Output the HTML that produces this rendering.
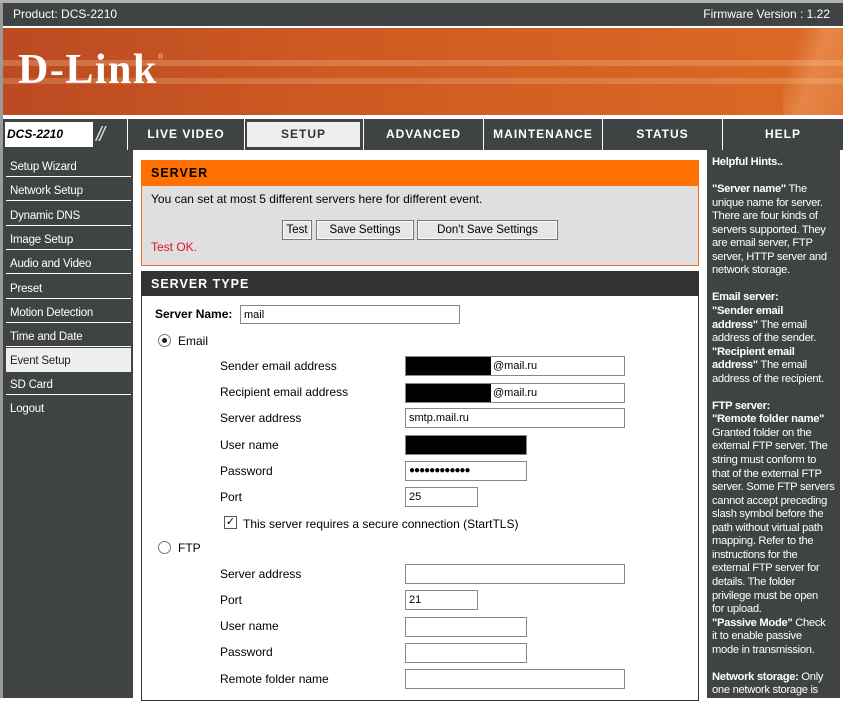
<!DOCTYPE html>
<html><head><meta charset="utf-8"><style>
*{margin:0;padding:0;box-sizing:border-box}
body{width:843px;height:698px;overflow:hidden;background:#fff;font-family:"Liberation Sans",Tahoma,sans-serif;font-size:12px;color:#000;position:relative}
.a{position:absolute}
.top{left:3px;top:3px;width:840px;height:23px;background:#404344;color:#fff;font-size:12px}
.banner{left:3px;top:28px;width:840px;height:87px;background:linear-gradient(90deg,#bb4a22 0%,#cf5a22 40%,#dc6a25 100%);overflow:hidden}
.nav{top:119px;height:31px;background:#404344;color:#fff;font-weight:bold;font-size:12px;letter-spacing:1px;text-align:center;line-height:31px}
.side{left:3px;top:150px;width:130px;height:548px;background:#404344}
.si{position:absolute;left:6px;width:125px;height:23px;color:#fff;font-size:11.5px;line-height:26px;padding-left:4px;border-bottom:1px solid #fff;letter-spacing:-0.2px}
.hint{left:707px;top:150px;width:133px;height:548px;background:#404344;color:#fff;font-size:11.2px;line-height:13.55px;padding:6px 3px 0 5px;letter-spacing:-0.3px}
.lbl{position:absolute;left:220px;font-size:12px}
.in{position:absolute;left:405px;height:20px;border:1px solid #888;background:#fff;font-size:11px;padding-left:3px;line-height:18px}
.btn{position:absolute;top:220px;height:20px;border:1px solid #777;background:#e6e6e6;font-size:11.5px;text-align:center;line-height:18px;box-shadow:inset 0 0 0 1px #fafafa}
.radio{position:absolute;width:13px;height:13px;border:1px solid #777;border-radius:50%;background:#fff}
</style></head><body>
<div class="a" style="left:0;top:0;width:3px;height:698px;background:#9a9a9a"></div>
<div class="a" style="left:0;top:0;width:843px;height:3px;background:#b0b0b0"></div>
<div class="a top"><span class="a" style="left:10px;top:4px">Product: DCS-2210</span><span class="a" style="right:13px;top:4px">Firmware Version : 1.22</span></div>
<div class="a banner">
<div class="a" style="left:0;top:32px;width:840px;height:6px;background:rgba(255,220,180,.25)"></div>
<div class="a" style="left:0;top:50px;width:840px;height:6px;background:rgba(255,220,180,.22)"></div>
<div class="a" style="left:780px;top:0;width:60px;height:87px;background:linear-gradient(110deg,rgba(255,200,150,0) 20%,rgba(255,200,150,.3) 50%,rgba(255,200,150,.15) 100%)"></div>
<div class="a" style="left:15px;top:20px;color:#fff;font-family:'Liberation Serif',serif;font-weight:bold;font-size:42px;line-height:44px;letter-spacing:1.5px">D-Link</div>
<div class="a" style="left:155px;top:26px;color:#f3d8c8;font-size:7px">®</div>
</div>
<div class="a nav" style="left:3px;width:124px">
<div class="a" style="left:2px;top:3px;width:88px;height:25px;background:#fff;color:#000;font-style:italic;text-align:left;line-height:25px;padding-left:2px;letter-spacing:0;font-size:12px">DCS-2210</div>
<div class="a" style="left:93px;top:4px;color:#ddd;font-style:italic;font-size:20px;line-height:24px;letter-spacing:-2px;font-weight:normal">//</div>
</div>
<div class="a nav" style="left:128px;width:116px">LIVE VIDEO</div>
<div class="a nav" style="left:245px;width:118px;background:#404344"><div class="a" style="left:2px;top:3px;width:113px;height:25px;background:#eee;color:#333;line-height:25px">SETUP</div></div>
<div class="a nav" style="left:364px;width:119px">ADVANCED</div>
<div class="a nav" style="left:484px;width:118px">MAINTENANCE</div>
<div class="a nav" style="left:603px;width:119px">STATUS</div>
<div class="a nav" style="left:723px;width:120px">HELP</div>
<div class="a side"></div>
<div class="si" style="top:154px">Setup Wizard</div>
<div class="si" style="top:178px">Network Setup</div>
<div class="si" style="top:203px">Dynamic DNS</div>
<div class="si" style="top:227px">Image Setup</div>
<div class="si" style="top:251px">Audio and Video</div>
<div class="si" style="top:276px">Preset</div>
<div class="si" style="top:300px">Motion Detection</div>
<div class="si" style="top:324px">Time and Date</div>
<div class="si" style="top:348px;background:#efefef;color:#222;height:24px;border:none">Event Setup</div>
<div class="si" style="top:372px">SD Card</div>
<div class="si" style="top:396px;border:none">Logout</div>

<div class="a" style="left:141px;top:160px;width:558px;height:106px;background:#dfdfdf;border:1px solid #f07020"></div>
<div class="a" style="left:141px;top:160px;width:558px;height:26px;background:#ff7000;color:#000;font-weight:bold;font-size:12.5px;letter-spacing:1px;line-height:26px;padding-left:10px">SERVER</div>
<div class="a" style="left:151px;top:192px">You can set at most 5 different servers here for different event.</div>
<div class="btn" style="left:282px;width:30px">Test</div>
<div class="btn" style="left:316px;width:98px">Save Settings</div>
<div class="btn" style="left:417px;width:141px">Don't Save Settings</div>
<div class="a" style="left:151px;top:240px;color:#e0102a">Test OK.</div>

<div class="a" style="left:141px;top:271px;width:558px;height:430px;border:1px solid #333;background:#fff"></div>
<div class="a" style="left:141px;top:271px;width:558px;height:25px;background:#333;color:#fff;font-weight:bold;font-size:12.5px;letter-spacing:1px;line-height:26px;padding-left:10px">SERVER TYPE</div>
<div class="a" style="left:155px;top:307px;font-weight:bold">Server Name:</div>
<div class="in" style="left:240px;top:305px;width:220px;height:19px">mail</div>
<div class="radio" style="left:158px;top:334px"><div class="a" style="left:3px;top:3px;width:5px;height:5px;border-radius:50%;background:#222"></div></div>
<div class="a" style="left:178px;top:334px">Email</div>

<div class="lbl" style="top:359px">Sender email address</div>
<div class="in" style="top:356px;width:220px"><span class="a" style="left:0;top:0;width:85px;height:18px;background:#000"></span><span class="a" style="left:87px">@mail.ru</span></div>
<div class="lbl" style="top:385px">Recipient email address</div>
<div class="in" style="top:383px;width:220px"><span class="a" style="left:0;top:0;width:85px;height:18px;background:#000"></span><span class="a" style="left:87px">@mail.ru</span></div>
<div class="lbl" style="top:411px">Server address</div>
<div class="in" style="top:408px;width:220px">smtp.mail.ru</div>
<div class="lbl" style="top:438px">User name</div>
<div class="in" style="top:435px;width:122px;background:#000"></div>
<div class="lbl" style="top:464px">Password</div>
<div class="in" style="top:461px;width:122px;font-size:10px;letter-spacing:-1px">●●●●●●●●●●●●</div>
<div class="lbl" style="top:490px">Port</div>
<div class="in" style="top:487px;width:73px">25</div>
<div class="a" style="left:224px;top:516px;width:13px;height:13px;border:1px solid #555;background:#fff;font-size:11px;line-height:11px;text-align:center">✓</div>
<div class="a" style="left:243px;top:517px">This server requires a secure connection (StartTLS)</div>
<div class="radio" style="left:158px;top:541px"></div>
<div class="a" style="left:178px;top:541px">FTP</div>
<div class="lbl" style="top:567px">Server address</div>
<div class="in" style="top:564px;width:220px"></div>
<div class="lbl" style="top:593px">Port</div>
<div class="in" style="top:590px;width:73px">21</div>
<div class="lbl" style="top:619px">User name</div>
<div class="in" style="top:617px;width:122px"></div>
<div class="lbl" style="top:645px">Password</div>
<div class="in" style="top:643px;width:122px"></div>
<div class="lbl" style="top:672px">Remote folder name</div>
<div class="in" style="top:669px;width:220px"></div>

<div class="a hint"><b>Helpful Hints..</b><br><br><b>"Server name"</b> The<br>unique name for server.<br>There are four kinds of<br>servers supported. They<br>are email server, FTP<br>server, HTTP server and<br>network storage.<br><br><b>Email server:<br>"Sender email<br>address"</b> The email<br>address of the sender.<br><b>"Recipient email<br>address"</b> The email<br>address of the recipient.<br><br><b>FTP server:<br>"Remote folder name"</b><br>Granted folder on the<br>external FTP server. The<br>string must conform to<br>that of the external FTP<br>server. Some FTP servers<br>cannot accept preceding<br>slash symbol before the<br>path without virtual path<br>mapping. Refer to the<br>instructions for the<br>external FTP server for<br>details. The folder<br>privilege must be open<br>for upload.<br><b>"Passive Mode"</b> Check<br>it to enable passive<br>mode in transmission.<br><br><b>Network storage:</b> Only<br>one network storage is</div>
</body></html>
